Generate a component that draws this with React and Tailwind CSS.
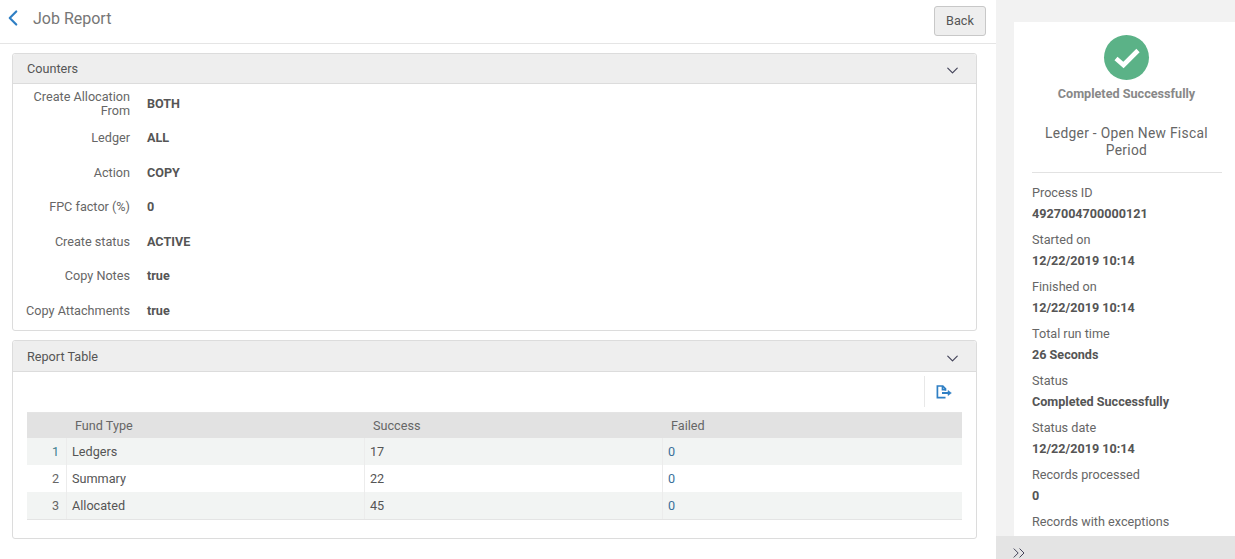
import { ChevronLeft, ChevronDown, ChevronsRight } from 'lucide-react';

const COUNTERS = [
    ['Create Allocation From', 'BOTH'],
    ['Ledger', 'ALL'],
    ['Action', 'COPY'],
    ['FPC factor (%)', '0'],
    ['Create status', 'ACTIVE'],
    ['Copy Notes', 'true'],
    ['Copy Attachments', 'true'],
];

const ROWS = [
    { n: 1, type: 'Ledgers', success: 17, failed: 0 },
    { n: 2, type: 'Summary', success: 22, failed: 0 },
    { n: 3, type: 'Allocated', success: 45, failed: 0 },
];

const DETAILS = [
    ['Process ID', '4927004700000121'],
    ['Started on', '12/22/2019 10:14'],
    ['Finished on', '12/22/2019 10:14'],
    ['Total run time', '26 Seconds'],
    ['Status', 'Completed Successfully'],
    ['Status date', '12/22/2019 10:14'],
    ['Records processed', '0'],
    ['Records with exceptions', ''],
];

function CardHeader({ title, height }) {
    return (
        <div className={`flex items-center justify-between border-b border-[#dcdcdc] bg-[#eeeeee] pl-[14px] pr-[14px] rounded-t-[3px] ${height}`}>
            <span className="pt-[2px] text-[12.65px] text-[#555]">{title}</span>
            <ChevronDown size={19} strokeWidth={1.5} className="mt-[4px] text-[#44445a]" />
        </div>
    );
}

function ExportIcon() {
    return (
        <svg width="16" height="14" viewBox="0 0 16 14" fill="none" stroke="#2f7fc4" strokeWidth="1.7">
            <path d="M9.5 12.6H1.4V1h5.4l2.7 2.8v2" />
            <path d="M6.5 1v3.6h3" />
            <path d="M6 8h7" strokeWidth="2" />
            <path d="M12 5.4 15.4 8 12 10.6z" fill="#2f7fc4" strokeWidth="0.5" />
        </svg>
    );
}

export default function App() {
    return (
        <div className="flex h-[559px] w-[1235px] overflow-hidden bg-white font-['Roboto',sans-serif] text-[12.65px] text-[#555]">
            <div className="w-[996px] flex-shrink-0">
                <div className="flex h-[44px] items-center justify-between border-b border-[#e5e5e5] pr-[10px]">
                    <div className="flex items-center">
                        <ChevronLeft size={26} strokeWidth={2} className="mb-[7px] text-[#2f7fc4]" />
                        <span className="mb-[6px] ml-[7px] text-[16px] text-[#767676]">Job Report</span>
                    </div>
                    <button className="mb-[2px] h-[30px] w-[52px] rounded-[3px] border border-[#c8c8c8] bg-[#eeeeee] pt-[1px] text-[12.65px] text-[#555]">Back</button>
                </div>

                {/* Counters */}
                <div className="ml-[12px] mr-[19px] mt-[9px] h-[278px] rounded-[3px] border border-[#dcdcdc]">
                    <CardHeader title="Counters" height="h-[30px]" />
                    <div className="pt-[2.55px]">
                        {COUNTERS.map(([label, value]) => (
                            <div key={label} className="flex h-[34.5px] items-center">
                                <div className="w-[117px] text-right text-[12.65px] leading-[14px] text-[#666]">{label}</div>
                                <div className="ml-[17px] pt-[1px] text-[12.6px] font-bold text-[#555]">{value}</div>
                            </div>
                        ))}
                    </div>
                </div>

                {/* Report table */}
                <div className="ml-[12px] mr-[19px] mt-[9px] h-[199px] rounded-[3px] border border-[#dcdcdc]">
                    <CardHeader title="Report Table" height="h-[31px]" />
                    <div className="flex h-[40px] justify-end pr-[14px] pt-[4px]">
                        <div className="flex h-[31px] w-[38px] items-center justify-center border-l border-[#e8e8e8]">
                            <ExportIcon />
                        </div>
                    </div>
                    <div className="mx-[14px] border-b border-t border-[#e4e4e4] text-[12.65px]">
                        <div className="flex h-[25px] items-center bg-[#e2e2e2] pt-[2px] text-[#666]">
                            <div className="w-[48px]" />
                            <div className="w-[298px]">Fund Type</div>
                            <div className="w-[298px]">Success</div>
                            <div>Failed</div>
                        </div>
                        {ROWS.map((row) => (
                            <div key={row.n} className={`flex h-[27px] items-center ${row.n % 2 === 1 ? 'bg-[#f2f4f3]' : 'bg-white'}`}>
                                <div className={`flex h-full w-[40px] items-center justify-end border-r border-[#ececec] pr-[7px] pt-[2px] ${row.n === 1 ? 'text-[#3f7f8f]' : 'text-[#666]'}`}>{row.n}</div>
                                <div className="flex h-full w-[298px] items-center border-r border-[#ececec] pl-[5px] pt-[2px] text-[#555]">{row.type}</div>
                                <div className="flex h-full w-[298px] items-center border-r border-[#ececec] pl-[5px] pt-[2px] text-[#555]">{row.success}</div>
                                <div className="pl-[5px] pt-[2px] text-[#3a6f9a]">{row.failed}</div>
                            </div>
                        ))}
                    </div>
                </div>
            </div>

            {/* Side panel */}
            <div className="flex flex-1 flex-col bg-[#f2f2f2]">
                <div className="ml-[18px] mt-[22px] min-h-0 flex-1 overflow-hidden bg-white pl-[18px] pr-[13px]">
                    <div className="flex flex-col items-center pr-[1px] pt-[13px]">
                        <div className="flex h-[45px] w-[45px] items-center justify-center rounded-full bg-[#5bb287]">
                            <svg width="28" height="22" viewBox="0 0 28 22" fill="none" stroke="white" strokeWidth="4.6">
                                <path d="M3 11.5 10.5 18 25 3.5" />
                            </svg>
                        </div>
                        <div className="mt-[5px] text-[12.65px] font-bold text-[#888]">Completed Successfully</div>
                        <div className="mt-[21px] w-[180px] text-center text-[13.8px] leading-[17px] tracking-[0.3px] text-[#666]">Ledger - Open New Fiscal Period</div>
                    </div>
                    <div className="mt-[13px] border-t border-[#e2e2e2] pt-[10px]">
                        {DETAILS.map(([label, value]) => (
                            <div key={label} className="h-[47px]">
                                <div className="h-[19px] text-[12.65px] leading-[19px] text-[#666]">{label}</div>
                                <div className="mt-[2px] text-[12.6px] font-bold leading-[19px] text-[#555]">{value}</div>
                            </div>
                        ))}
                    </div>
                </div>
                <div className="flex h-[23px] flex-shrink-0 items-start overflow-hidden bg-[#e4e4e4] pl-[13px]">
                    <ChevronsRight size={20} strokeWidth={1.2} className="mt-[7px] text-[#44445a]" />
                </div>
            </div>
        </div>
    );
}
